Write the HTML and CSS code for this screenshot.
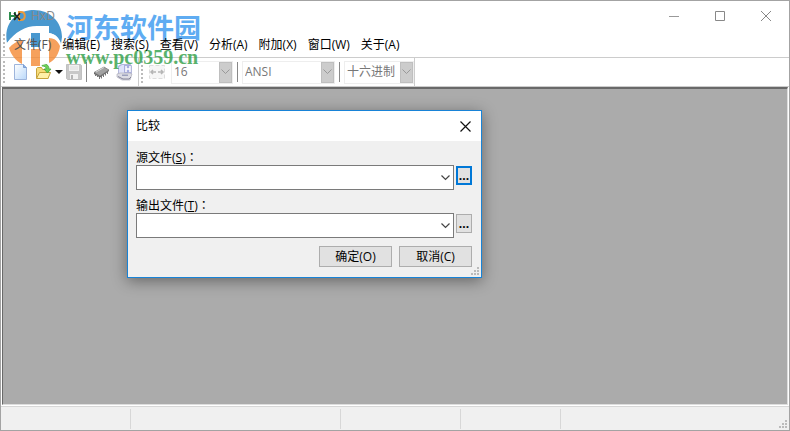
FILE: index.html
```html
<!DOCTYPE html>
<html lang="zh-CN">
	<head>
		<meta charset="utf-8" />
		<title>HxD</title>
		<link rel="stylesheet" href="styles.css" />
	</head>
	<body>
		<div class="window">
			<header class="titlebar">
				<svg class="app-icon" width="17" height="12" viewBox="0 0 17 12" fill="none">
					<path d="M1 2v8M6 2v8M1 6h5" stroke="#2f8f4f" stroke-width="2" />
					<path d="M10 2v8h2c5 0 5-8 0-8z" stroke="#e89a3c" stroke-width="2" />
					<path d="M5 3l6 7M11 3l-6 7" stroke="#222" stroke-width="1.5" />
				</svg>
				<span class="title">HxD</span>
				<div class="window-buttons">
					<button type="button" aria-label="最小化">
						<svg width="10" height="10" stroke="#999" fill="none"><path d="M0 5.500h10" /></svg>
					</button>
					<button type="button" aria-label="最大化">
						<svg width="10" height="10" stroke="#888" fill="none"><path d="M.5.5h9v9h-9z" /></svg>
					</button>
					<button type="button" aria-label="关闭">
						<svg width="10" height="10" stroke="#888" fill="none"><path d="M0 0l10 10M10 0L0 10" /></svg>
					</button>
				</div>
			</header>

			<nav class="menubar">
				<span class="grip"></span>
				<a href="#">文件(F)</a>
				<a href="#">编辑(E)</a>
				<a href="#">搜索(S)</a>
				<a href="#">查看(V)</a>
				<a href="#">分析(A)</a>
				<a href="#">附加(X)</a>
				<a href="#">窗口(W)</a>
				<a href="#">关于(A)</a>
			</nav>

			<div class="toolbar">
				<span class="grip"></span>
				<div class="tools">
					<button type="button" class="tool" aria-label="新建">
						<svg width="16" height="18" viewBox="0 0 16 18">
							<defs>
								<linearGradient id="page" x1="0" y1="0" x2="1" y2="1">
									<stop offset="0" stop-color="#fff" />
									<stop offset="1" stop-color="#b9d8fa" />
								</linearGradient>
							</defs>
							<path d="M1.500 1.500h9l3 3v12h-12z" fill="url(#page)" stroke="#9eb5dc" />
							<path d="M10.500 1.500v3h3" fill="#8db4ea" stroke="#7d9ed0" />
						</svg>
					</button>
					<button type="button" class="tool open" aria-label="打开">
						<svg width="17" height="18" viewBox="0 0 17 18">
							<path d="M1.500 15V5.500l1-1h4l1 2h6V15z" fill="#f7dc7a" stroke="#c7a33b" />
							<path d="M1.500 15.500l3-6h11l-2.500 6z" fill="#fff0a8" stroke="#c7a33b" />
							<path d="M7 2c4-2 7 0 7 4h2l-3.500 4L9 6h2c0-2-1-3-4-3z" fill="#6ed156" stroke="#3f9d39" stroke-width=".7" />
						</svg>
						<svg class="drop" width="8" height="4"><path d="M0 0h8L4 4z" fill="#111" /></svg>
					</button>
					<button type="button" class="tool" aria-label="保存" disabled>
						<svg width="16" height="16" viewBox="0 0 16 16">
							<path d="M.5.5h14l1 1v14H1.500l-1-1z" fill="#c8c8c8" stroke="#c0c0c0" />
							<path d="M3 1h10v6H3zM4 10h8v5H4z" fill="#f1f1f1" />
							<path d="M5 11h2v4H5z" fill="#b4b4b4" />
							<path d="M4 3h8M4 5h8" stroke="#ddd" />
						</svg>
					</button>
					<span class="separator"></span>
					<button type="button" class="tool ram" aria-label="打开内存">
						<svg width="17" height="14" viewBox="0 0 17 14">
							<path d="M1 7.500l10-5.500 5 3-9 6z" fill="#a2a2a2" stroke="#777" stroke-width=".7" />
							<path d="M1 7.500v1.500l6 3.500 9-6.500V5l-9 6z" fill="#666" />
							<path d="M2.500 9v2M4.500 10v2M6.500 12v2M8.500 11v2.500M10.500 10v2M12.500 8v2.500M14.500 7v2" stroke="#777" />
							<path d="M3 7l8-4.500" stroke="#d5d5d5" />
						</svg>
					</button>
					<button type="button" class="tool disk" aria-label="打开磁盘">
						<svg width="17" height="17" viewBox="0 0 17 17">
							<path d="M2.500 2l3-1.500h9l1 1.500v8h-13z" fill="#a9aee0" stroke="#b4b8da" />
							<path d="M3 3l3-2h2v8H3z" fill="#dfe2fa" />
							<path d="M10 2v6M14 2v6M10 5h4" stroke="#fff" stroke-width="1.500" />
							<path d="M1 10l3-1h10l2 1-2 6H6l-5-3z" fill="#dcdce4" stroke="#b0b0bc" stroke-width=".7" />
							<path d="M2 12.500l5 2.500h6l2-2" stroke="#85859a" fill="none" />
							<path d="M6 10.500h6v1.500H6z" fill="#9ca0bd" />
						</svg>
					</button>
				</div>
				<span class="grip"></span>
				<div class="options">
					<button type="button" class="tool width" aria-label="每行字节数" disabled>
						<svg width="16" height="14" viewBox="0 0 16 14" fill="none">
							<path d="M.5.5h15v13H.5z" fill="#f6f6f6" stroke="#ddd" stroke-dasharray="4 2" />
							<path d="M2 7h5M4 5L2 7l2 2M9 7h5M12 5l2 2-2 2" stroke="#b5b5b5" stroke-width="1.500" />
						</svg>
					</button>
					<div class="picker picker-bytes">
						<select aria-label="每行字节数" disabled><option>16</option></select>
						<span class="arrow"><svg width="9" height="6"><path d="M.5.5l4 4 4-4" /></svg></span>
					</div>
					<span class="separator"></span>
					<div class="picker picker-charset">
						<select aria-label="字符集" disabled><option>ANSI</option></select>
						<span class="arrow"><svg width="9" height="6"><path d="M.5.5l4 4 4-4" /></svg></span>
					</div>
					<span class="separator"></span>
					<div class="picker picker-base">
						<select aria-label="进制" disabled><option>十六进制</option></select>
						<span class="arrow"><svg width="9" height="6"><path d="M.5.5l4 4 4-4" /></svg></span>
					</div>
				</div>
			</div>

			<main class="workspace"></main>

			<footer class="statusbar">
				<span></span>
				<span></span>
				<span></span>
				<span></span>
				<span></span>
				<svg class="resize" width="8" height="8" fill="#bbb"><path d="M6 0h2v2H6zM3 3h2v2H3zM6 3h2v2H6zM0 6h2v2H0zM3 6h2v2H3zM6 6h2v2H6z" /></svg>
			</footer>

			<div class="watermark">
				<svg width="58" height="58" viewBox="0 0 58 58">
					<path d="M1 33C-3 13 11 0 28 0c16 0 28 12 28 27l-1 7c-2-7-6-10-12-11v-5H31c-12 0-22 5-30 15z" fill="#1c7fc4" />
					<path d="M25 23h9v14h-9z" fill="#1c7fc4" />
					<path d="M3 38c3-4 8-7 13-8v24C10 51 5 45 3 38zM25 39h9v17h-9zM43 27c5 1 9 4 11 9-1 8-5 14-11 17z" fill="#f58a35" />
					<path d="M1 33c8-11 18-17 30-17h12v7c6 1 10 5 12 11-3-4-7-6-12-6v25l-9 3V23h-9v33l-9-3V28c-5 1-10 5-13 9z" fill="#fff" />
				</svg>
				<div class="watermark-text">
					<div class="site-name">河东软件园</div>
					<div class="site-url">www.pc0359.cn</div>
				</div>
			</div>

			<div class="dialog" role="dialog" aria-labelledby="dialogTitle">
				<div class="dialog-title">
					<span id="dialogTitle">比较</span>
					<button type="button" class="dialog-close" aria-label="关闭">
						<svg width="11" height="11" stroke="#111" stroke-width="1.200" fill="none"><path d="M.5.5l10 10M10.500.5l-10 10" /></svg>
					</button>
				</div>
				<form class="dialog-body">
					<label for="source">源文件(<u>S</u>)<span class="colon" lang="zh-TW">：</span></label>
					<div class="field">
						<div class="file-select">
							<select id="source"><option></option></select>
							<svg width="9" height="6"><path d="M.5.5l4 4 4-4" /></svg>
						</div>
						<button type="button" class="browse focused">...</button>
					</div>
					<label for="output">输出文件(<u>T</u>)<span class="colon" lang="zh-TW">：</span></label>
					<div class="field">
						<div class="file-select">
							<select id="output"><option></option></select>
							<svg width="9" height="6"><path d="M.5.5l4 4 4-4" /></svg>
						</div>
						<button type="button" class="browse">...</button>
					</div>
					<div class="actions">
						<button type="submit">确定(O)</button>
						<button type="button">取消(C)</button>
					</div>
				</form>
				<svg class="resize" width="8" height="8" fill="#bbb"><path d="M6 0h2v2H6zM3 3h2v2H3zM6 3h2v2H6zM0 6h2v2H0zM3 6h2v2H3zM6 6h2v2H6z" /></svg>
			</div>
		</div>
	</body>
</html>
```
FILE: styles.css
```css
* {
	box-sizing: border-box;
}

body {
	margin: 0;
	font-family: "Open Sans", "Noto Sans CJK SC", sans-serif;
	font-size: 12px;
	line-height: 16px;
	color: #000;
}

button,
select {
	font: inherit;
	color: inherit;
	padding: 0;
	margin: 0;
	border: none;
	border-radius: 0;
	background: none;
}

svg {
	display: block;
	flex: none;
}

.window {
	position: relative;
	display: flex;
	flex-direction: column;
	min-height: 100vh;
	border: 1px solid #a3a3a3;
	background: #fff;
}

/* title bar */
.titlebar {
	display: flex;
	align-items: center;
	height: 29px;
	padding-left: 8px;
}

.app-icon {
	position: relative;
	z-index: 1;
}

.title {
	position: relative;
	z-index: 1;
	margin-left: 5px;
	color: #888;
}

.window-buttons {
	display: flex;
	margin-left: auto;
}

.window-buttons button {
	display: flex;
	align-items: center;
	justify-content: center;
	width: 46px;
	height: 28px;
}

/* menu and tool bars */
.menubar {
	display: flex;
	align-items: center;
	gap: 11px;
	height: 28px;
	padding-top: 2px;
	border-bottom: 1px solid #ccc;
}

.menubar a {
	position: relative;
	z-index: 1;
	color: #000;
	text-decoration: none;
	white-space: nowrap;
}

.menubar a:nth-of-type(1) {
	color: #555;
}

.grip {
	width: 2px;
	height: 22px;
	margin-left: 2px;
	background: repeating-linear-gradient(#bbb 0 2px, #fff 2px 4px);
}

.menubar .grip {
	margin-right: -2px;
}

.toolbar {
	display: flex;
	align-items: center;
	height: 29px;
	border-bottom: 1px solid #ccc;
}

.tools,
.options {
	display: flex;
	align-items: center;
	height: 28px;
	border-right: 1px solid #ccc;
}

.tools {
	padding-left: 8px;
	width: 134px;
}

.tool {
	display: flex;
	align-items: center;
}

.open {
	margin-left: 6px;
}

.drop {
	margin: 0 3px;
}

.separator {
	width: 1px;
	height: 20px;
	margin: 0 4px;
	background: #888;
}

.ram {
	margin-left: 2px;
}

.disk {
	margin-left: 6px;
}

.options {
	padding-left: 6px;
}

.width {
	margin-right: 6px;
}

.picker {
	display: flex;
	height: 23px;
	border: 1px solid #eee;
	color: #777;
}

.picker select {
	flex: 1;
	min-width: 0;
	padding-left: 2px;
	appearance: none;
	opacity: 1;
}

.picker-bytes {
	width: 62px;
}

.picker-charset {
	width: 93px;
}

.picker-base {
	width: 70px;
}

.arrow {
	display: flex;
	align-items: center;
	justify-content: center;
	width: 13px;
	background: #ccc;
	border: 1px solid #bfbfbf;
}

.arrow path {
	fill: none;
	stroke: #999;
}

/* document area */
.workspace {
	flex: 1;
	margin: 0 1px 1px;
	background: #ababab;
	border: 1px solid #ddd;
	border-top: 2px solid #696969;
	border-left: 1px solid #696969;
}

.statusbar {
	position: relative;
	display: grid;
	grid-template-columns: 130px 210px 120px 100px 1fr;
	height: 24px;
	padding: 2px 0 1px;
	border-top: 1px solid #d7d7d7;
	background: #f0f0f0;
}

.statusbar span {
	border-right: 1px solid #d7d7d7;
}

.statusbar span:nth-child(5) {
	border-right: none;
}

.resize {
	position: absolute;
	right: 2px;
	bottom: 2px;
}

/* site mark over the bars */
.watermark {
	position: absolute;
	top: 9px;
	left: 5px;
	display: flex;
	gap: 2px;
	opacity: 0.8;
	pointer-events: none;
}

.site-name {
	color: #3898f0;
	font-family: "Noto Sans CJK SC", sans-serif;
	font-size: 27px;
	font-weight: bold;
	line-height: 34px;
	white-space: nowrap;
}

.site-url {
	color: #30a048;
	font-family: "Liberation Serif", serif;
	font-size: 20px;
	font-weight: bold;
	line-height: 26px;
}

/* compare dialog */
.dialog {
	position: absolute;
	top: 109px;
	left: 126px;
	width: 355px;
	border: 1px solid #1883d7;
	background: #f0f0f0;
	box-shadow: 0 3px 14px rgba(0, 0, 0, 0.4);
}

.dialog-title {
	display: flex;
	align-items: center;
	justify-content: space-between;
	height: 30px;
	padding: 0 10px 0 8px;
	background: #fff;
}

.dialog-body {
	padding: 9px 9px 10px 8px;
}

.dialog-body label {
	display: block;
	height: 15px;
}

.colon {
	font-family: "Noto Sans CJK TC", sans-serif;
	line-height: 1;
}

.field {
	display: flex;
	gap: 2px;
	margin-bottom: 8px;
}

.file-select {
	position: relative;
	flex: 1;
}

.file-select select {
	display: block;
	width: 100%;
	height: 25px;
	border: 1px solid #7a7a7a;
	background: #fff;
	appearance: none;
}

.file-select svg {
	position: absolute;
	top: 10px;
	right: 4px;
	fill: none;
	stroke: #444;
	stroke-width: 1.2;
	pointer-events: none;
}

.browse {
	width: 16px;
	height: 19px;
	margin-top: 1px;
	border: 1px solid #adadad;
	background: #e1e1e1;
	font-weight: bold;
	line-height: 15px;
}

.browse.focused {
	border: 2px solid #0078d7;
}

.actions {
	display: flex;
	justify-content: flex-end;
	gap: 7px;
}

.actions button {
	width: 73px;
	height: 21px;
	border: 1px solid #adadad;
	background: #e1e1e1;
}
```
